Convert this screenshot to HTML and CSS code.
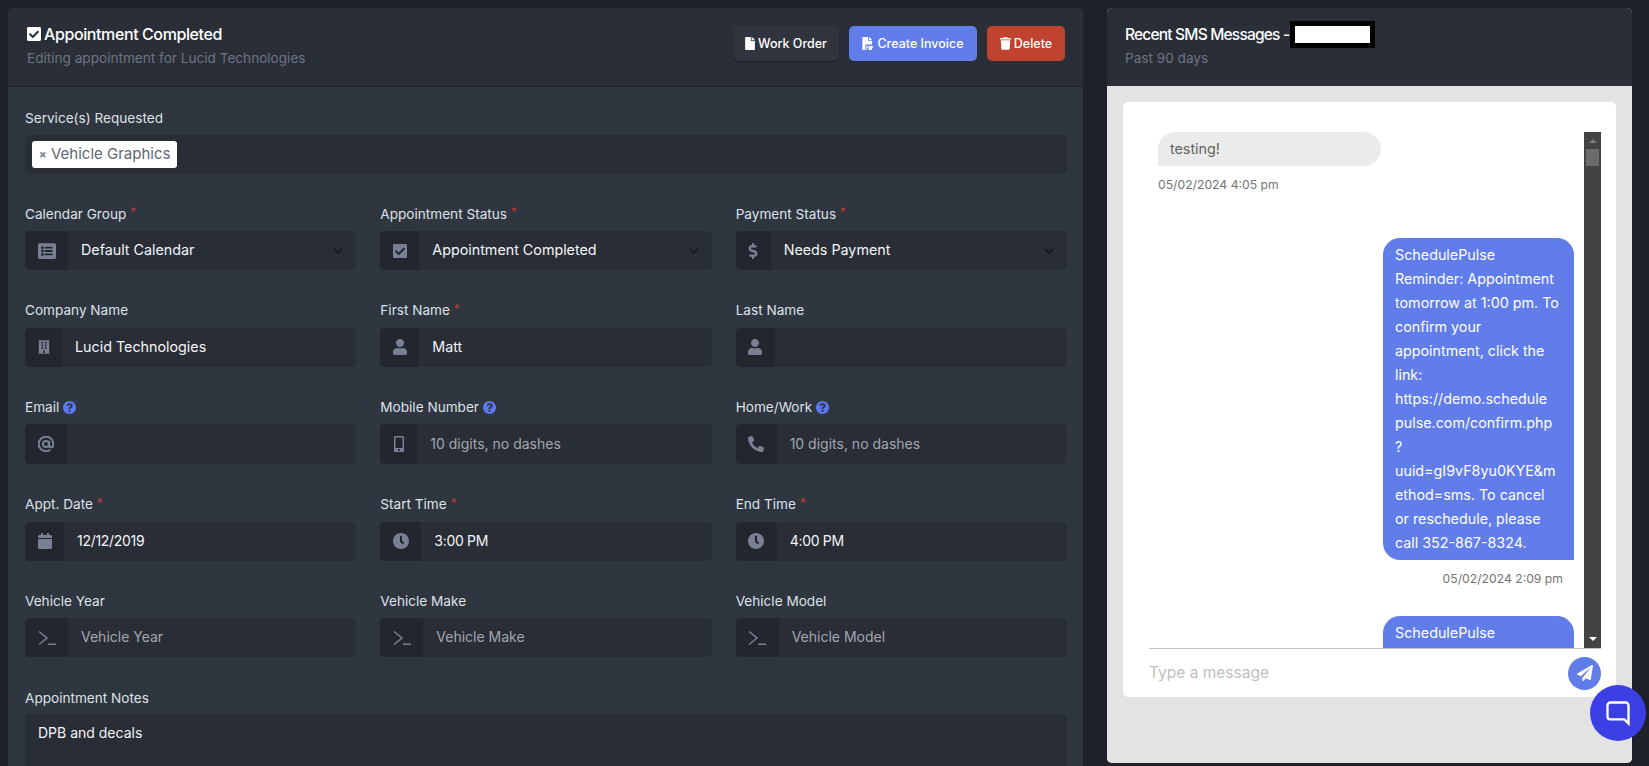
FILE: index.html
```html
<!DOCTYPE html>
<html lang="en">
<head>
<meta charset="utf-8">
<title>Appointment Completed</title>
<link rel="stylesheet" href="styles.css">
</head>
<body>
<svg class="sprite" aria-hidden="true">
<symbol id="i-check" viewBox="0 32 448 448"><path d="M400 480H48c-26.51 0-48-21.49-48-48V80c0-26.51 21.49-48 48-48h352c26.51 0 48 21.49 48 48v352c0 26.51-21.49 48-48 48zm-204.686-98.059l184-184c6.248-6.248 6.248-16.379 0-22.627l-22.627-22.627c-6.248-6.248-16.379-6.249-22.628 0L184 302.745l-70.059-70.059c-6.248-6.248-16.379-6.248-22.628 0l-22.627 22.627c-6.248 6.248-6.248 16.379 0 22.627l104 104c6.249 6.25 16.379 6.25 22.628.001z"/></symbol>
<symbol id="i-file" viewBox="0 0 384 512"><path d="M224 136V0H24C10.7 0 0 10.7 0 24v464c0 13.3 10.7 24 24 24h336c13.3 0 24-10.7 24-24V160H248c-13.2 0-24-10.8-24-24zm160-14.1v6.1H256V0h6.1c6.4 0 12.5 2.5 17 7l97.9 98c4.5 4.5 7 10.6 7 16.9z"/></symbol>
<symbol id="i-pdf" viewBox="0 0 448 512"><path d="M224 136V0H24C10.7 0 0 10.7 0 24v464c0 13.3 10.7 24 24 24h96V296h264V160H248c-13.2 0-24-10.8-24-24zm160-14.1v6.1H256V0h6.1c6.4 0 12.5 2.5 17 7l97.9 98c4.5 4.5 7 10.6 7 16.9z"/><path d="M160 340h64v36h-32v24h28v32h-28v80h-32zM248 340h36a56 56 0 0 1 0 172h-36zM344 340h88v36h-56v32h48v32h-48v72h-32z"/></symbol>
<symbol id="i-trash" viewBox="0 0 448 512"><path d="M432 32H312l-9.4-18.7A24 24 0 0 0 281.1 0H166.8a23.72 23.72 0 0 0-21.4 13.3L136 32H16A16 16 0 0 0 0 48v32a16 16 0 0 0 16 16h416a16 16 0 0 0 16-16V48a16 16 0 0 0-16-16zM53.2 467a48 48 0 0 0 47.9 45h245.8a48 48 0 0 0 47.9-45L416 128H32z"/></symbol>
<symbol id="i-list" viewBox="0 32 512 448"><path d="M464 480H48c-26.51 0-48-21.49-48-48V80c0-26.51 21.49-48 48-48h416c26.51 0 48 21.49 48 48v352c0 26.51-21.49 48-48 48zM128 120c-22.091 0-40 17.909-40 40s17.909 40 40 40 40-17.909 40-40-17.909-40-40-40zm0 96c-22.091 0-40 17.909-40 40s17.909 40 40 40 40-17.909 40-40-17.909-40-40-40zm0 96c-22.091 0-40 17.909-40 40s17.909 40 40 40 40-17.909 40-40-17.909-40-40-40zm288-136v-32c0-6.627-5.373-12-12-12H204c-6.627 0-12 5.373-12 12v32c0 6.627 5.373 12 12 12h200c6.627 0 12-5.373 12-12zm0 96v-32c0-6.627-5.373-12-12-12H204c-6.627 0-12 5.373-12 12v32c0 6.627 5.373 12 12 12h200c6.627 0 12-5.373 12-12zm0 96v-32c0-6.627-5.373-12-12-12H204c-6.627 0-12 5.373-12 12v32c0 6.627 5.373 12 12 12h200c6.627 0 12-5.373 12-12z"/></symbol>
<symbol id="i-dollar" viewBox="0 0 288 512"><path d="M209.2 233.4l-108-31.6C88.7 198.2 80 186.5 80 173.5c0-16.3 13.2-29.5 29.5-29.5h66.3c12.2 0 24.2 3.7 34.2 10.5 6.1 4.1 14.3 3.1 19.5-2l34.8-34c7.1-6.9 6.1-18.4-1.8-24.5C238 74.8 207.4 64.1 176 64V16c0-8.8-7.2-16-16-16h-32c-8.8 0-16 7.2-16 16v48h-2.5C45.8 64-5.4 118.7.5 183.6c4.2 46.1 39.4 83.6 83.8 96.6l102.5 30c12.5 3.7 21.2 15.3 21.2 28.3 0 16.3-13.2 29.5-29.5 29.5h-66.3C100 368 88 364.3 78 357.5c-6.1-4.1-14.3-3.1-19.5 2l-34.8 34c-7.1 6.9-6.1 18.4 1.8 24.5 24.5 19.2 55.1 29.9 86.5 30v48c0 8.8 7.2 16 16 16h32c8.8 0 16-7.2 16-16v-48.2c46.6-.9 90.3-28.6 105.7-72.7 21.5-61.6-14.6-124.8-72.5-141.7z"/></symbol>
<symbol id="i-building" viewBox="0 0 448 512"><path d="M436 480h-20V24c0-13.255-10.745-24-24-24H56C42.745 0 32 10.745 32 24v456H12c-6.627 0-12 5.373-12 12v20h448v-20c0-6.627-5.373-12-12-12zM128 76c0-6.627 5.373-12 12-12h40c6.627 0 12 5.373 12 12v40c0 6.627-5.373 12-12 12h-40c-6.627 0-12-5.373-12-12V76zm0 96c0-6.627 5.373-12 12-12h40c6.627 0 12 5.373 12 12v40c0 6.627-5.373 12-12 12h-40c-6.627 0-12-5.373-12-12v-40zm52 148h-40c-6.627 0-12-5.373-12-12v-40c0-6.627 5.373-12 12-12h40c6.627 0 12 5.373 12 12v40c0 6.627-5.373 12-12 12zm76 160h-64v-84c0-6.627 5.373-12 12-12h40c6.627 0 12 5.373 12 12v84zm64-172c0 6.627-5.373 12-12 12h-40c-6.627 0-12-5.373-12-12v-40c0-6.627 5.373-12 12-12h40c6.627 0 12 5.373 12 12v40zm0-96c0 6.627-5.373 12-12 12h-40c-6.627 0-12-5.373-12-12v-40c0-6.627 5.373-12 12-12h40c6.627 0 12 5.373 12 12v40zm0-96c0 6.627-5.373 12-12 12h-40c-6.627 0-12-5.373-12-12V76c0-6.627 5.373-12 12-12h40c6.627 0 12 5.373 12 12v40z"/></symbol>
<symbol id="i-user" viewBox="0 0 448 512"><path d="M224 256c70.7 0 128-57.3 128-128S294.7 0 224 0 96 57.3 96 128s57.3 128 128 128zm89.6 32h-16.7c-22.2 10.2-46.9 16-72.9 16s-50.6-5.8-72.9-16h-16.7C60.2 288 0 348.2 0 422.4V464c0 26.5 21.5 48 48 48h352c26.5 0 48-21.5 48-48v-41.6c0-74.2-60.2-134.4-134.4-134.4z"/></symbol>
<symbol id="i-at" viewBox="1 1 22 22"><path d="M16.2 12a4.2 4.2 0 1 1-8.4 0 4.2 4.2 0 0 1 8.4 0zm0-4.2V13.600a2.900 2.900 0 0 0 5.800 0V12a10 10 0 1 0-3.900 7.900" fill="none" stroke="currentColor" stroke-width="2.800"/></symbol>
<symbol id="i-mobile" viewBox="0 0 320 512"><path d="M272 0H48C21.5 0 0 21.5 0 48v416c0 26.5 21.5 48 48 48h224c26.5 0 48-21.5 48-48V48c0-26.5-21.5-48-48-48zM160 480c-17.7 0-32-14.3-32-32s14.3-32 32-32 32 14.3 32 32-14.3 32-32 32zm112-108c0 6.6-5.4 12-12 12H60c-6.6 0-12-5.4-12-12V60c0-6.6 5.4-12 12-12h200c6.6 0 12 5.4 12 12v312z"/></symbol>
<symbol id="i-phone" viewBox="0 0 512 512"><path transform="matrix(-1 0 0 1 512 0)" d="M493.4 24.6l-104-24c-11.3-2.6-22.9 3.3-27.5 13.9l-48 112c-4.2 9.8-1.4 21.3 6.9 28l60.6 49.6c-36 76.7-98.9 140.5-177.2 177.2l-49.6-60.6c-6.8-8.3-18.2-11.1-28-6.9l-112 48C3.9 366.5-2 378.1.6 389.4l24 104C27.1 504.2 36.7 512 48 512c256.1 0 464-207.5 464-464 0-11.2-7.7-20.9-18.6-23.4z"/></symbol>
<symbol id="i-calendar" viewBox="0 0 448 512"><path d="M12 192h424c6.600 0 12 5.400 12 12v260c0 26.500-21.500 48-48 48H48c-26.500 0-48-21.500-48-48V204c0-6.600 5.400-12 12-12zm436-44v-36c0-26.500-21.500-48-48-48h-48V12c0-6.600-5.400-12-12-12h-40c-6.600 0-12 5.400-12 12v52H160V12c0-6.600-5.400-12-12-12h-40c-6.600 0-12 5.400-12 12v52H48C21.500 64 0 85.500 0 112v36c0 6.600 5.400 12 12 12h424c6.600 0 12-5.400 12-12z"/></symbol>
<symbol id="i-clock" viewBox="8 8 496 496"><path d="M256,8C119,8,8,119,8,256S119,504,256,504,504,393,504,256,393,8,256,8Zm92.490,313h0l-20,25a16,16,0,0,1-22.490,2.500h0l-67-49.720a40,40,0,0,1-15-31.230V112a16,16,0,0,1,16-16h32a16,16,0,0,1,16,16V256l58,42.500A16,16,0,0,1,348.490,321Z"/></symbol>
<symbol id="i-terminal" viewBox="0 0 18 14"><path d="M1 .5l8 6.500-8 6.500M10 13.200h8" fill="none" stroke="currentColor" stroke-width="1.500"/></symbol>
<symbol id="i-help" viewBox="8 8 496 496"><path d="M504 256c0 136.997-111.043 248-248 248S8 392.997 8 256C8 119.083 119.043 8 256 8s248 111.083 248 248zM262.655 90c-54.497 0-89.255 22.957-116.549 63.758-3.536 5.286-2.353 12.415 2.715 16.258l34.699 26.310c5.205 3.947 12.621 3.008 16.665-2.122 17.864-22.658 30.113-35.797 57.303-35.797 20.429 0 45.698 13.148 45.698 32.958 0 14.976-12.363 22.667-32.534 33.976C247.128 238.528 216 254.941 216 296v4c0 6.627 5.373 12 12 12h56c6.627 0 12-5.373 12-12v-1.333c0-28.462 83.186-29.647 83.186-106.667 0-58.002-60.165-102-116.531-102zM256 338c-25.365 0-46 20.635-46 46 0 25.364 20.635 46 46 46s46-20.636 46-46c0-25.365-20.635-46-46-46z"/></symbol>
<symbol id="i-plane" viewBox="0 0 512 512"><path d="M476 3.200L12.500 270.600c-18.100 10.400-15.800 35.600 2.200 43.200L121 358.400l287.300-253.200c5.500-4.900 13.300 2.600 8.600 8.300L176 407v80.500c0 23.600 28.500 32.900 42.500 15.800L282 426l124.600 52.200c14.200 6 30.400-2.900 33-18.200l72-432C515 7.800 493.300-6.800 476 3.200z"/></symbol>
<symbol id="i-chev" viewBox="0 0 10 6"><path d="M1 1l4 4 4-4" fill="none" stroke="currentColor" stroke-width="1.600"/></symbol>
</svg>

<div class="page">
  <section class="card form-card">
    <header class="card-head">
      <div class="head-text">
        <h1 class="card-title"><svg class="ico ico-title"><use href="#i-check"/></svg>Appointment Completed</h1>
        <p class="card-sub">Editing appointment for Lucid Technologies</p>
      </div>
      <div class="actions">
        <button class="btn btn-dark"><svg class="ico ico-btn-file"><use href="#i-file"/></svg>Work Order</button>
        <button class="btn btn-primary"><svg class="ico ico-btn-pdf"><use href="#i-pdf"/></svg>Create Invoice</button>
        <button class="btn btn-danger"><svg class="ico ico-btn-trash"><use href="#i-trash"/></svg>Delete</button>
      </div>
    </header>
    <div class="form-body">
      <div class="field">
        <label class="label">Service(s) Requested</label>
        <div class="tag-box"><span class="tag"><span class="tag-x">&#10006;</span>Vehicle Graphics</span></div>
      </div>
      <div class="grid">
        <div class="field">
          <label class="label">Calendar Group <span class="req">*</span></label>
          <div class="control"><span class="addon"><svg class="ico w18"><use href="#i-list"/></svg></span><span class="value">Default Calendar</span><svg class="chev"><use href="#i-chev"/></svg></div>
        </div>
        <div class="field">
          <label class="label">Appointment Status <span class="req">*</span></label>
          <div class="control"><span class="addon"><svg class="ico w14"><use href="#i-check"/></svg></span><span class="value">Appointment Completed</span><svg class="chev"><use href="#i-chev"/></svg></div>
        </div>
        <div class="field">
          <label class="label">Payment Status <span class="req">*</span></label>
          <div class="control"><span class="addon"><svg class="ico w10"><use href="#i-dollar"/></svg></span><span class="value">Needs Payment</span><svg class="chev"><use href="#i-chev"/></svg></div>
        </div>

        <div class="field">
          <label class="label">Company Name</label>
          <div class="control"><span class="addon"><svg class="ico w12"><use href="#i-building"/></svg></span><span class="value">Lucid Technologies</span></div>
        </div>
        <div class="field">
          <label class="label">First Name <span class="req">*</span></label>
          <div class="control"><span class="addon"><svg class="ico w14"><use href="#i-user"/></svg></span><span class="value">Matt</span></div>
        </div>
        <div class="field">
          <label class="label">Last Name</label>
          <div class="control"><span class="addon"><svg class="ico w14"><use href="#i-user"/></svg></span><span class="value"></span></div>
        </div>

        <div class="field">
          <label class="label">Email <svg class="help"><use href="#i-help"/></svg></label>
          <div class="control tall"><span class="addon"><svg class="ico w16"><use href="#i-at"/></svg></span><span class="value"></span></div>
        </div>
        <div class="field">
          <label class="label">Mobile Number <svg class="help"><use href="#i-help"/></svg></label>
          <div class="control tall"><span class="addon"><svg class="ico w12"><use href="#i-mobile"/></svg></span><span class="value ph">10 digits, no dashes</span></div>
        </div>
        <div class="field">
          <label class="label">Home/Work <svg class="help"><use href="#i-help"/></svg></label>
          <div class="control tall"><span class="addon"><svg class="ico w16"><use href="#i-phone"/></svg></span><span class="value ph">10 digits, no dashes</span></div>
        </div>

        <div class="field">
          <label class="label">Appt. Date <span class="req">*</span></label>
          <div class="control"><span class="addon"><svg class="ico w14"><use href="#i-calendar"/></svg></span><span class="value num">12/12/2019</span></div>
        </div>
        <div class="field">
          <label class="label">Start Time <span class="req">*</span></label>
          <div class="control"><span class="addon"><svg class="ico w16"><use href="#i-clock"/></svg></span><span class="value num">3:00 PM</span></div>
        </div>
        <div class="field">
          <label class="label">End Time <span class="req">*</span></label>
          <div class="control"><span class="addon"><svg class="ico w16"><use href="#i-clock"/></svg></span><span class="value num">4:00 PM</span></div>
        </div>

        <div class="field">
          <label class="label">Vehicle Year</label>
          <div class="control"><span class="addon"><svg class="ico w18"><use href="#i-terminal"/></svg></span><span class="value ph">Vehicle Year</span></div>
        </div>
        <div class="field">
          <label class="label">Vehicle Make</label>
          <div class="control"><span class="addon"><svg class="ico w18"><use href="#i-terminal"/></svg></span><span class="value ph">Vehicle Make</span></div>
        </div>
        <div class="field">
          <label class="label">Vehicle Model</label>
          <div class="control"><span class="addon"><svg class="ico w18"><use href="#i-terminal"/></svg></span><span class="value ph">Vehicle Model</span></div>
        </div>
      </div>
      <div class="field notes">
        <label class="label">Appointment Notes</label>
        <div class="notes-box">DPB and decals</div>
      </div>
    </div>
  </section>

  <aside class="card sms-card">
    <header class="card-head sms-head">
      <h2 class="card-title sms-title">Recent SMS Messages -<span class="redact"></span></h2>
      <p class="card-sub">Past 90 days</p>
    </header>
    <div class="sms-body">
      <div class="chat">
        <div class="chat-main">
          <div class="msgs">
            <div class="msg msg-in">
              <div class="bubble">testing!</div>
              <div class="stamp">05/02/2024 4:05 pm</div>
            </div>
            <div class="msg msg-out">
              <div class="bubble">SchedulePulse<br>Reminder: Appointment<br>tomorrow at 1:00 pm. To<br>confirm your<br>appointment, click the<br>link:<br>https://demo.schedule<br>pulse.com/confirm.php<br>?<br>uuid=gI9vF8yu0KYE&amp;m<br>ethod=sms. To cancel<br>or reschedule, please<br>call 352-867-8324.</div>
              <div class="stamp">05/02/2024 2:09 pm</div>
            </div>
            <div class="msg msg-out">
              <div class="bubble bubble-clipped">SchedulePulse</div>
            </div>
          </div>
          <div class="scrollbar"><span class="arrow up"></span><span class="thumb"></span><span class="arrow down"></span></div>
        </div>
        <div class="composer">
          <span class="composer-input">Type a message</span>
          <button class="send"><svg class="ico w18"><use href="#i-plane"/></svg></button>
        </div>
      </div>
    </div>
  </aside>
</div>

<button class="support"><svg viewBox="0 0 24 24" class="support-ico"><path d="M3 5.500A2.500 2.500 0 0 1 5.500 3h13A2.500 2.500 0 0 1 21 5.500V21l-3.500-3.500h-12A2.500 2.500 0 0 1 3 15z"/></svg></button>
</body>
</html>
```
FILE: styles.css
```css
* { box-sizing: border-box; }
html, body { margin: 0; height: 766px; overflow: hidden; }
body {
  background: #1e2129;
  font-family: "Inter", "Noto Sans", sans-serif;
  font-size: 13.5px;
  color: #e4e7ec;
}
.sprite { display: none; }
.page {
  display: flex;
  gap: 24px;
  align-items: flex-start;
  padding: 8px 17px 0 8px;
}
.ico { fill: currentColor; display: block; flex: none; height: 16px; }
.card { border-radius: 5px; overflow: hidden; }
.form-card { width: 1075px; background: #2f3640; flex: none; }
.sms-card { width: 525px; height: 755px; flex: none; display: flex; flex-direction: column; background: #e3e3e3; }

.card-head {
  height: 78px;
  background: #2a2e37;
  padding: 0 17px 0 19px;
  display: flex;
  align-items: center;
  justify-content: space-between;
  box-shadow: 0 1px 0 #23262e;
}
.head-text { padding-bottom: 2px; }
.sms-head {
  flex: none;
  flex-direction: column;
  align-items: flex-start;
  justify-content: flex-start;
  padding: 13px 18px 0;
  box-shadow: none;
}
.sms-head .card-sub { margin-top: 0; }
.card-title {
  margin: 0;
  font-size: 16px;
  line-height: 20px;
  font-weight: 500;
  color: #fff;
  letter-spacing: -0.4px;
  display: flex;
  align-items: center;
}
.sms-title { font-size: 15.5px; letter-spacing: -0.8px; }
.ico-title { width: 14px; height: 14px; margin-right: 3px; }
.card-sub { margin: 4px 0 0; font-size: 13.6px; line-height: 20px; color: #6d7484; }
.redact {
  width: 85px;
  height: 27px;
  background: #fff;
  border: 5px solid #000;
  margin-left: 1px;
}

.actions { display: flex; gap: 10px; margin-right: 1px; align-self: flex-start; margin-top: 18px; }
.btn {
  height: 35px;
  border: 0;
  border-radius: 5px;
  font: 500 12.5px/35px "Inter", sans-serif;
  color: #fff;
  display: flex;
  align-items: center;
  justify-content: center;
  padding: 0;
}
.btn-dark { width: 106px; background: #2f343e; box-shadow: 0 1px 1px #1b1e24; }
.btn-primary { width: 128px; background: #607de9; }
.btn-danger { width: 78px; background: #bf432e; }
.ico-btn-file { width: 10px; height: 13px; margin-right: 3px; }
.ico-btn-pdf { width: 12px; height: 13px; margin-right: 3px; }
.ico-btn-trash { width: 11px; height: 13px; margin-right: 3px; }

.form-body { padding: 21px 16px 0 17px; height: 700px; }
.grid {
  display: grid;
  grid-template-columns: repeat(3, 1fr);
  column-gap: 24px;
  row-gap: 29.5px;
  margin-top: 29px;
}
.label {
  display: flex;
  align-items: center;
  gap: 4px;
  height: 21px;
  padding-top: 1px;
  margin-bottom: 7px;
  font-size: 13.6px;
  line-height: 21px;
  color: #dde1e8;
}
.req { color: #c23a30; margin-top: -3px; font-size: 11.5px; }
.help { width: 13px; height: 13px; fill: #5c78f0; }

.tag-box { height: 39px; background: #292d36; border-radius: 5px; padding: 6px 7px; }
.tag {
  display: inline-flex;
  align-items: center;
  height: 27px;
  background: #fff;
  border-radius: 3px;
  padding: 0 7px 2px;
  color: #5f6672;
  font-size: 15px;
}
.tag-x { font-size: 9px; color: #8a8f99; margin: 2px 4px 0 0; }

.control {
  height: 39px;
  display: flex;
  align-items: center;
  background: #292d36;
  border-radius: 5px;
  overflow: hidden;
}
.control.tall { height: 40px; }
.addon {
  height: 100%;
  background: #23262e;
  padding: 0 12.5px;
  display: flex;
  align-items: center;
  color: #7a8092;
  flex: none;
}
.w10 { width: 10px; }
.w12 { width: 12px; }
.w14 { width: 14px; }
.w16 { width: 16px; }
.w18 { width: 18px; }
.value { flex: 1; padding: 0 0 2px 13px; font-size: 14.3px; color: #f3f4f6; }
.value.ph { color: #a3a7af; font-size: 14px; }
.value.num { font-size: 14px; letter-spacing: -0.3px; }
.chev { width: 10px; height: 6px; margin-right: 13px; color: #14161a; flex: none; }

.notes { margin-top: 29px; }
.notes .label { padding-top: 3px; }
.notes-box {
  height: 120px;
  background: #292d36;
  border-radius: 5px;
  padding: 8px 13px;
  font-size: 14px;
  line-height: 22px;
  color: #f3f4f6;
}

.sms-body { flex: 1; padding: 16px 16px 0 16px; background: #e3e3e3; }
.chat {
  height: 595px;
  background: #fff;
  border-radius: 5px;
  padding: 30px 15px 0 26px;
  display: flex;
  flex-direction: column;
}
.chat-main {
  height: 517px;
  flex: none;
  display: flex;
  border-bottom: 1px solid #c4c4c4;
}
.msgs {
  flex: 1;
  height: 516px;
  overflow: hidden;
  padding: 0 10px 0 9px;
}
.msg { display: flex; flex-direction: column; }
.msg-in { align-items: flex-start; margin-bottom: 43px; }
.msg-out { align-items: flex-end; margin-bottom: 27px; }
.bubble { padding: 5px 12px; font-size: 14.3px; line-height: 24px; white-space: nowrap; }
.bubble-clipped { min-height: 60px; }
.msg-in .bubble { width: 223px; background: #ebebeb; color: #646464; border-radius: 17px 17px 17px 0; }
.msg-out .bubble { width: 191px; background: #607de9; color: #fff; border-radius: 17px 17px 0 17px; }
.stamp { font-size: 12.2px; line-height: 20px; margin-top: 9px; color: #747474; }
.msg-out .stamp { margin-right: 11px; }

.scrollbar {
  width: 17px;
  flex: none;
  height: 516px;
  background: #434343;
  display: flex;
  flex-direction: column;
  align-items: center;
  padding-top: 7px;
  position: relative;
}
.arrow { width: 0; height: 0; border: 4px solid transparent; }
.arrow.up { border-bottom: 4px solid #7b7b7b; border-top: 0; }
.arrow.down { border-top: 4px solid #fff; border-bottom: 0; position: absolute; bottom: 7px; }
.thumb { width: 13px; height: 17px; background: #6b6b6b; margin-top: 6px; }

.composer { display: flex; align-items: center; justify-content: space-between; height: 50px; }
.composer-input { font-size: 15.5px; color: #c0c0c0; margin-top: -2px; }
.send {
  width: 33px;
  height: 33px;
  border-radius: 50%;
  border: 0;
  padding: 0;
  background: #607de9;
  color: #fff;
  display: flex;
  align-items: center;
  justify-content: center;
}
.send .ico { width: 16px; height: 16px; }

.support {
  position: fixed;
  right: 3px;
  bottom: 25px;
  width: 56px;
  height: 56px;
  border-radius: 50%;
  border: 0;
  padding: 0;
  background: #3b3fe4;
  display: flex;
  align-items: center;
  justify-content: center;
}
.support-ico { width: 28px; height: 28px; fill: none; stroke: #fff; stroke-width: 2; }
```
